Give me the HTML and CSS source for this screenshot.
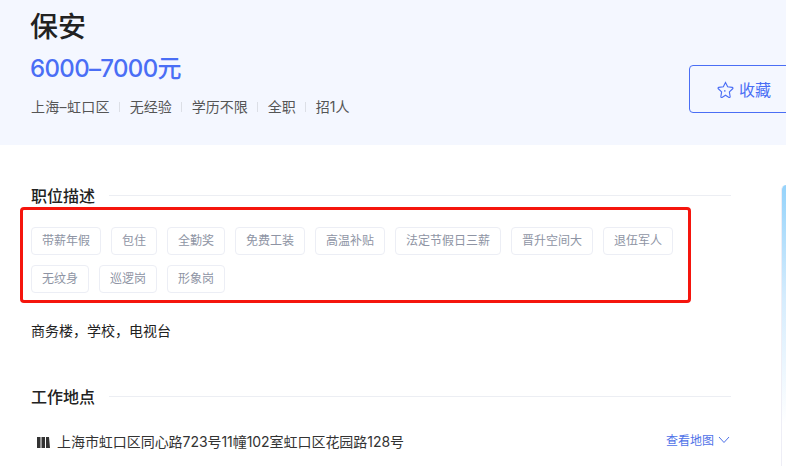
FILE: index.html
```html
<!DOCTYPE html>
<html lang="zh-CN">
<head>
<meta charset="utf-8">
<title>保安</title>
<link rel="stylesheet" href="styles.css">
</head>
<body>
<header class="hero">
  <div class="hero-main">
    <h1 class="job-title">保安</h1>
    <div class="salary">6000–7000元</div>
    <ul class="meta">
      <li>上海–虹口区</li>
      <li>无经验</li>
      <li>学历不限</li>
      <li>全职</li>
      <li>招1人</li>
    </ul>
  </div>
  <button class="fav" type="button">
    <svg class="star" viewBox="0 0 18 18" width="17" height="17"><path d="M9 1.500l2.300 4.600 4.800.7c.8.100 1 .9.500 1.400l-3.500 3.400.8 4.800c.1.800-.6 1.300-1.200 1L9 15.100l-3.700 2.300c-.6.300-1.300-.2-1.200-1l.8-4.800-3.500-3.400c-.5-.5-.3-1.300.5-1.400l4.800-.7z" fill="none" stroke="#4a6ef5" stroke-width="1.200"/><path d="M8.300 9.500v1.800" stroke="#4a6ef5" stroke-width="1.200"/></svg>
    <span>收藏</span>
  </button>
</header>
<div class="body">
  <main class="content">
    <section class="sec-desc">
      <div class="sec-head"><h2>职位描述</h2><i class="rule"></i></div>
      <div class="mark">
        <ul class="tags">
          <li>带薪年假</li><li>包住</li><li>全勤奖</li><li>免费工装</li><li>高温补贴</li><li>法定节假日三薪</li><li>晋升空间大</li><li>退伍军人</li><li>无纹身</li><li>巡逻岗</li><li>形象岗</li>
        </ul>
      </div>
      <p class="desc">商务楼，学校，电视台</p>
    </section>
    <section class="sec-place">
      <div class="sec-head"><h2>工作地点</h2><i class="rule"></i></div>
      <div class="addr">
        <svg class="pin" viewBox="0 0 13 13" width="13" height="13"><path d="M0 1h3.500v11H0zM4.500 1H8v11H4.500zM9 1h3l1 11H9z" fill="#333"/></svg>
        <span class="addr-text">上海市虹口区同心路723号11幢102室虹口区花园路128号</span>
        <a class="map-link">查看地图<svg class="chev" viewBox="0 0 12 8" width="12" height="8"><path d="M1 1l5 5.500L11 1" fill="none" stroke="#4f72e8" stroke-width="1"/></svg></a>
      </div>
    </section>
  </main>
  <aside class="side"></aside>
</div>
</body>
</html>
```

FILE: styles.css
```css
* { box-sizing: border-box; }
html, body { margin: 0; padding: 0; }
body {
  width: 786px;
  height: 466px;
  overflow: hidden;
  background: #fff;
  font-family: "Inter", "Noto Sans CJK SC", sans-serif;
  color: #222;
}
ul { list-style: none; margin: 0; padding: 0; }
.hero {
  height: 145px;
  background: #f4f7ff;
  padding-left: 31px;
  display: flex;
  justify-content: space-between;
  overflow: hidden;
}
.job-title {
  margin: 10px 0 0 -1px;
  font-size: 28px;
  line-height: 34px;
  font-weight: 500;
  color: #222;
}
.salary {
  margin: 8px 0 0 -1px;
  font-size: 24px;
  line-height: 34px;
  font-weight: 500;
  letter-spacing: -0.65px;
  color: #4a6ef5;
}
.meta {
  display: flex;
  align-items: center;
  margin-top: 10px;
  font-size: 14px;
  line-height: 22px;
  color: #555;
}
.meta li:first-child { letter-spacing: 0.3px; }
.meta li + li { margin-left: 10px; padding-left: 10px; position: relative; }
.meta li + li::before {
  content: "";
  position: absolute;
  left: -1px;
  top: 6px;
  width: 1px;
  height: 10px;
  background: #dcdfe6;
}
.fav {
  margin-top: 65px;
  width: 120px;
  height: 48px;
  margin-right: -23px;
  flex: none;
  border: 1px solid #4a6ef5;
  border-radius: 4px;
  background: transparent;
  color: #4a6ef5;
  font: 400 16px "Inter", "Noto Sans CJK SC", sans-serif;
  display: flex;
  align-items: center;
  gap: 5px;
  padding: 0 0 0 27px;
}
.body { display: flex; height: 321px; }
.content { width: 731px; padding-left: 31px; flex: none; }
.sec-desc { padding-top: 41px; }
.sec-head { display: flex; align-items: center; gap: 14px; height: 20px; }
.sec-head h2 { margin: 0; font-size: 16px; line-height: 20px; font-weight: 500; color: #222; }
.rule { flex: 1; height: 1px; margin-bottom: 2px; background: #eceef3; }
.mark {
  margin: 1px 0 0 -11px;
  width: 671px;
  height: 96px;
  border: 3px solid #f5150d;
  border-radius: 4px;
  padding: 17px 0 0 8px;
}
.tags { display: flex; flex-wrap: wrap; gap: 10px; }
.tags li {
  height: 28px;
  padding: 0 10px;
  border: 1px solid #eceef5;
  border-radius: 4px;
  font-size: 12px;
  line-height: 25px;
  color: #8e94a4;
}
.desc { margin: 18px 0 0; font-size: 14px; line-height: 20px; color: #222; }
.sec-place { margin-top: 46px; }
.addr { display: flex; align-items: center; margin-top: 24px; height: 22px; }
.pin { margin: 0 7px 0 6px; flex: none; }
.addr-text { font-size: 14px; line-height: 22px; letter-spacing: -0.05px; color: #333; }
.map-link { margin-left: auto; margin-top: -6px; font-size: 12px; color: #4f72e8; display: flex; align-items: center; gap: 4px; padding-right: 1px; }
.chev { margin-top: 2px; }
.side {
  margin: 40px 0 0 50px;
  flex: 1;
  background: linear-gradient(180deg, #95d3fb 0%, #d5ecfd 40%, #ffffff 85%);
  border-left: 1px solid #eeeef6;
  border-radius: 7px 0 0 0;
}
```
